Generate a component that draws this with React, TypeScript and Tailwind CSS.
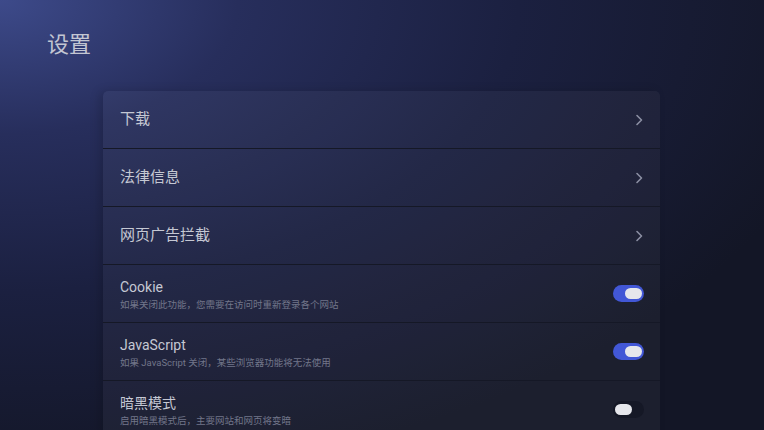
import { useState } from "react";

type LinkRowProps = {
    label: string,
}

function LinkRow({ label }: LinkRowProps) {
    return (
        <div className="flex h-[58px] items-center justify-between border-b border-[#151826] pl-[17px] pr-[17px]">
            <span className="text-[15px] text-[#c5c8d3]">{label}</span>
            <svg width="8" height="12" viewBox="0 0 8 12" fill="none">
                <path d="M2 1.5L6.5 6L2 10.5" stroke="#8b8fa3" strokeWidth="1.6" strokeLinecap="round" strokeLinejoin="round" />
            </svg>
        </div>
    )
}

type SwitchRowProps = {
    label: string,
    desc: string,
    on: boolean,
    onToggle: () => void,
}

function SwitchRow({ label, desc, on, onToggle }: SwitchRowProps) {
    return (
        <div className="flex h-[58px] items-center justify-between border-b border-[#151826] pl-[17px] pr-[16px]">
            <div className="flex flex-col gap-[4px] pt-[2px]">
                <span className="text-[14px] leading-[16px] text-[#c5c8d3]">{label}</span>
                <span className="text-[9.5px] leading-[12px] text-[#72768a]">{desc}</span>
            </div>
            <button
                onClick={onToggle}
                className={
                    on
                        ? "flex h-[17px] w-[31px] items-center justify-end rounded-full bg-[#4257d6] px-[2px]"
                        : "flex h-[17px] w-[31px] items-center justify-start rounded-full bg-[#151826] px-[2px]"
                }
            >
                <span className="h-[11px] w-[17px] rounded-full bg-[#e6e7ec]" />
            </button>
        </div>
    )
}

export default function App() {
    const [cookie, setCookie] = useState(true)
    const [js, setJs] = useState(true)
    const [dark, setDark] = useState(false)

    return (
        <div
            className="h-[430px] w-[764px] overflow-hidden bg-[radial-gradient(ellipse_at_top_left,#3d4a8a_0%,#272e5c_22%,#1b2040_48%,#131626_80%)]"
            style={{ fontFamily: 'Roboto, "Noto Sans CJK SC", sans-serif' }}
        >
            <h1 className="pl-[47px] pt-[30px] text-[22px] leading-[30px] text-[#c3c6d2]">设置</h1>
            <div className="ml-[103px] mt-[31px] w-[557px] rounded-[5px] bg-[#ffffff0a] shadow-[-4px_0_10px_rgba(0,0,0,0.15)]">
                <LinkRow label="下载" />
                <LinkRow label="法律信息" />
                <LinkRow label="网页广告拦截" />
                <SwitchRow
                    label="Cookie"
                    desc="如果关闭此功能，您需要在访问时重新登录各个网站"
                    on={cookie}
                    onToggle={() => setCookie(!cookie)}
                />
                <SwitchRow
                    label="JavaScript"
                    desc="如果 JavaScript 关闭，某些浏览器功能将无法使用"
                    on={js}
                    onToggle={() => setJs(!js)}
                />
                <SwitchRow
                    label="暗黑模式"
                    desc="启用暗黑模式后，主要网站和网页将变暗"
                    on={dark}
                    onToggle={() => setDark(!dark)}
                />
            </div>
        </div>
    )
}
